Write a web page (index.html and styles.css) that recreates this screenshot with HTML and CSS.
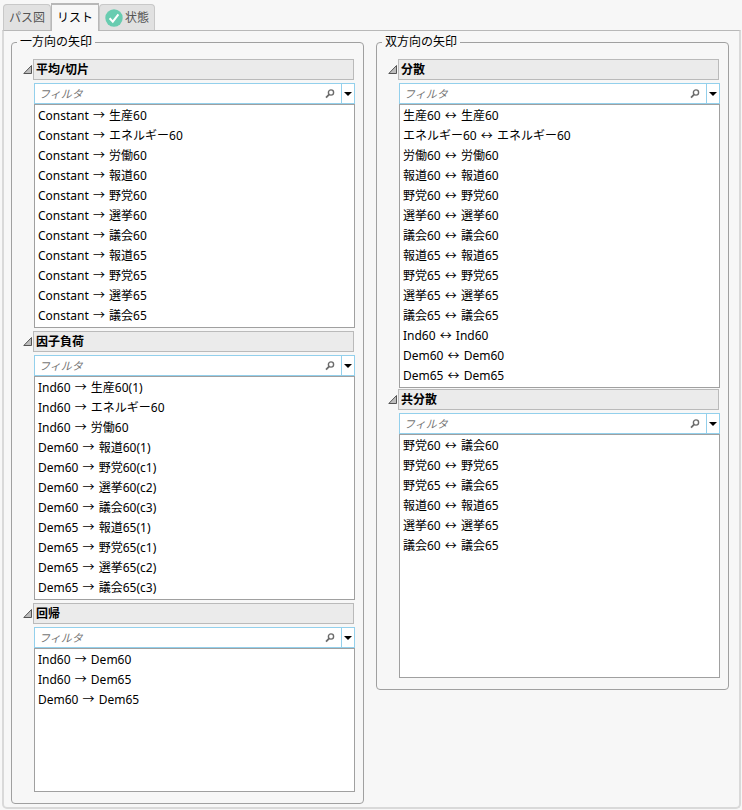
FILE: index.html
```html
<!DOCTYPE html>
<html lang="ja">
<head>
<meta charset="UTF-8">
<meta name="viewport" content="width=device-width, initial-scale=1.0">
<title>リスト</title>
<link rel="stylesheet" href="styles.css">
</head>
<body>

<svg width="0" height="0" class="symbols" aria-hidden="true">
  <symbol id="open" viewBox="0 0 10 10">
    <path d="M8.5 0.5V8.5H0.8Z" fill="#bdbdbd" stroke="#555" />
  </symbol>
  <symbol id="search" viewBox="0 0 10 10">
    <circle cx="6" cy="3.5" r="2.6" fill="none" stroke="#6b6b6b" stroke-width="1.4" />
    <path d="M4.2 5.4L1 8.6" stroke="#6b6b6b" stroke-width="1.8" />
  </symbol>
  <symbol id="down" viewBox="0 0 8 4">
    <path d="M0 0H8L4 4Z" fill="#000" />
  </symbol>
</svg>

<div class="tabs" role="tablist">
  <button class="tab" role="tab">パス図</button>
  <button class="tab active" role="tab" aria-selected="true">リスト</button>
  <button class="tab" role="tab">
    <svg class="status" viewBox="0 0 18 18" aria-hidden="true">
      <circle cx="9" cy="9" r="8.7" fill="#68ccb0" />
      <path d="M4.6 9.2L7.8 12.6L13.4 5.4" fill="none" stroke="#fff" stroke-width="2" />
    </svg>
    状態
  </button>
</div>

<main class="panel">
  <fieldset class="group">
    <legend>一方向の矢印</legend>

    <details open>
      <summary><svg class="open"><use href="#open" /></svg><span>平均/切片</span></summary>
      <div class="filter">
        <input type="text" placeholder="フィルタ" aria-label="平均/切片 フィルタ">
        <svg class="search"><use href="#search" /></svg>
        <button aria-label="フィルタのオプション"><svg class="down"><use href="#down" /></svg></button>
      </div>
      <ul class="list">
        <li>Constant <span>→</span> 生産60</li>
        <li>Constant <span>→</span> エネルギー60</li>
        <li>Constant <span>→</span> 労働60</li>
        <li>Constant <span>→</span> 報道60</li>
        <li>Constant <span>→</span> 野党60</li>
        <li>Constant <span>→</span> 選挙60</li>
        <li>Constant <span>→</span> 議会60</li>
        <li>Constant <span>→</span> 報道65</li>
        <li>Constant <span>→</span> 野党65</li>
        <li>Constant <span>→</span> 選挙65</li>
        <li>Constant <span>→</span> 議会65</li>
      </ul>
    </details>

    <details open>
      <summary><svg class="open"><use href="#open" /></svg><span>因子負荷</span></summary>
      <div class="filter">
        <input type="text" placeholder="フィルタ" aria-label="因子負荷 フィルタ">
        <svg class="search"><use href="#search" /></svg>
        <button aria-label="フィルタのオプション"><svg class="down"><use href="#down" /></svg></button>
      </div>
      <ul class="list">
        <li>Ind60 <span>→</span> 生産60(1)</li>
        <li>Ind60 <span>→</span> エネルギー60</li>
        <li>Ind60 <span>→</span> 労働60</li>
        <li>Dem60 <span>→</span> 報道60(1)</li>
        <li>Dem60 <span>→</span> 野党60(c1)</li>
        <li>Dem60 <span>→</span> 選挙60(c2)</li>
        <li>Dem60 <span>→</span> 議会60(c3)</li>
        <li>Dem65 <span>→</span> 報道65(1)</li>
        <li>Dem65 <span>→</span> 野党65(c1)</li>
        <li>Dem65 <span>→</span> 選挙65(c2)</li>
        <li>Dem65 <span>→</span> 議会65(c3)</li>
      </ul>
    </details>

    <details open>
      <summary><svg class="open"><use href="#open" /></svg><span>回帰</span></summary>
      <div class="filter">
        <input type="text" placeholder="フィルタ" aria-label="回帰 フィルタ">
        <svg class="search"><use href="#search" /></svg>
        <button aria-label="フィルタのオプション"><svg class="down"><use href="#down" /></svg></button>
      </div>
      <ul class="list short">
        <li>Ind60 <span>→</span> Dem60</li>
        <li>Ind60 <span>→</span> Dem65</li>
        <li>Dem60 <span>→</span> Dem65</li>
      </ul>
    </details>
  </fieldset>

  <fieldset class="group tight">
    <legend>双方向の矢印</legend>

    <details open>
      <summary><svg class="open"><use href="#open" /></svg><span>分散</span></summary>
      <div class="filter">
        <input type="text" placeholder="フィルタ" aria-label="分散 フィルタ">
        <svg class="search"><use href="#search" /></svg>
        <button aria-label="フィルタのオプション"><svg class="down"><use href="#down" /></svg></button>
      </div>
      <ul class="list">
        <li>生産60 <span>↔</span> 生産60</li>
        <li>エネルギー60 <span>↔</span> エネルギー60</li>
        <li>労働60 <span>↔</span> 労働60</li>
        <li>報道60 <span>↔</span> 報道60</li>
        <li>野党60 <span>↔</span> 野党60</li>
        <li>選挙60 <span>↔</span> 選挙60</li>
        <li>議会60 <span>↔</span> 議会60</li>
        <li>報道65 <span>↔</span> 報道65</li>
        <li>野党65 <span>↔</span> 野党65</li>
        <li>選挙65 <span>↔</span> 選挙65</li>
        <li>議会65 <span>↔</span> 議会65</li>
        <li>Ind60 <span>↔</span> Ind60</li>
        <li>Dem60 <span>↔</span> Dem60</li>
        <li>Dem65 <span>↔</span> Dem65</li>
      </ul>
    </details>

    <details open>
      <summary><svg class="open"><use href="#open" /></svg><span>共分散</span></summary>
      <div class="filter">
        <input type="text" placeholder="フィルタ" aria-label="共分散 フィルタ">
        <svg class="search"><use href="#search" /></svg>
        <button aria-label="フィルタのオプション"><svg class="down"><use href="#down" /></svg></button>
      </div>
      <ul class="list tall">
        <li>野党60 <span>↔</span> 議会60</li>
        <li>野党60 <span>↔</span> 野党65</li>
        <li>野党65 <span>↔</span> 議会65</li>
        <li>報道60 <span>↔</span> 報道65</li>
        <li>選挙60 <span>↔</span> 選挙65</li>
        <li>議会60 <span>↔</span> 議会65</li>
      </ul>
    </details>
  </fieldset>
</main>

</body>
</html>
```
FILE: styles.css
```css
* {
  box-sizing: border-box;
  padding: 0;
  margin: 0;
}

body {
  background: #f7f7f7;
  color: #000;
  font: 12px/20px "Noto Sans", "Noto Sans CJK JP", sans-serif;
}

button, input {
  font: inherit;
  color: inherit;
  border: none;
  background: none;
}

.symbols {
  position: absolute;
}

/* tabs */
.tabs {
  display: flex;
  align-items: flex-end;
  height: 30px;
  padding-left: 3px;
}

.tab {
  display: flex;
  align-items: center;
  gap: 2px;
  height: 26px;
  padding: 0 5px;
  border: 1px solid #c8c8c8;
  border-bottom: none;
  border-radius: 4px 4px 0 0;
  background: #e1e1e1;
  color: #555;
}

.tab.active {
  height: 28px;
  margin-bottom: -1px;
  border-color: #b8b8b8;
  border-top-width: 2px;
  border-radius: 0;
  background: #f7f7f7;
  color: #000;
  z-index: 1;
}

.status {
  width: 18px;
  height: 18px;
}

/* panel */
.panel {
  display: grid;
  grid-template-columns: 1fr 1fr;
  align-items: start;
  gap: 12px;
  margin: 0 1px 1px 2px;
  padding: 3px 10px 3px 7px;
  border: 2px solid #d9d9d9;
  border-top: 1px solid #b8b8b8;
  border-radius: 0 0 5px 5px;
}

.group {
  min-width: 0;
  padding: 9px 8px 11px 11px;
  border: 1px solid #a0a0a0;
  border-radius: 4px;
}

legend {
  margin-left: -6px;
  padding: 0 3px;
  line-height: 16px;
}

details + details {
  margin-top: 3px;
}

.tight details + details {
  margin-top: 1px;
}

summary {
  display: flex;
  align-items: center;
  margin-right: 1px;
  font-weight: bold;
}

summary span {
  flex: 1;
  height: 21px;
  padding-left: 2px;
  border: 1px solid #bababa;
  background: #ebebeb;
  line-height: 19px;
}

.open {
  width: 10px;
  height: 10px;
}

.filter {
  display: flex;
  align-items: center;
  height: 21px;
  margin: 3px 0 0 11px;
  border: 1px solid #93d0ec;
  background: #fff;
}

.filter input {
  flex: 1;
  min-width: 0;
  height: 19px;
  padding-left: 4px;
  outline: none;
}

.filter input::placeholder {
  color: #757575;
  font-size: 11px;
  font-style: italic;
}

.search {
  width: 10px;
  height: 10px;
  margin-right: 6px;
}

.filter button {
  display: flex;
  align-items: center;
  justify-content: center;
  width: 13px;
  height: 19px;
  border-left: 1px solid #93d0ec;
}

.down {
  width: 8px;
  height: 4px;
}

.list {
  margin-left: 11px;
  padding: 1px 3px;
  border: 1px solid #a0a0a0;
  background: #fff;
  list-style: none;
}

.list span {
  margin: 0 1px;
}

.list.short {
  min-height: 144px;
}

.list.tall {
  min-height: 244px;
}
```
